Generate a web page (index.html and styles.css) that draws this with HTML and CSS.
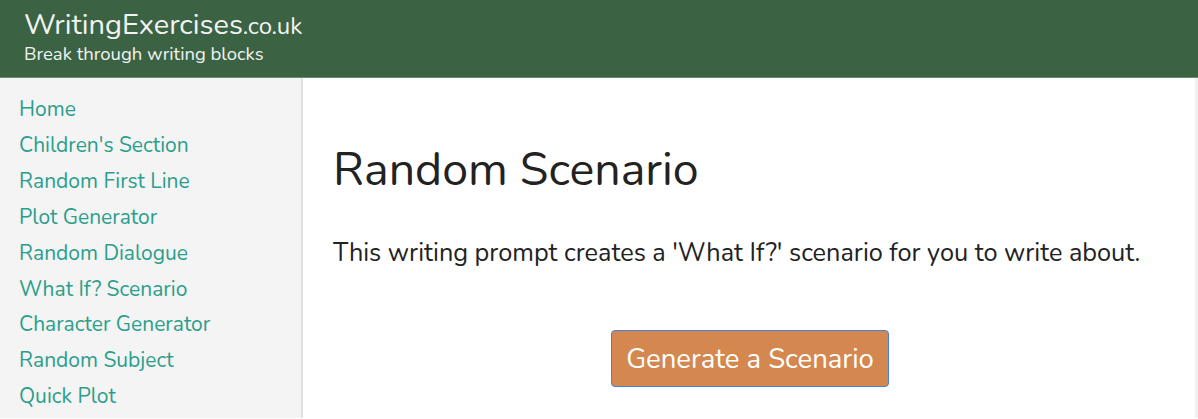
FILE: index.html
```html
<!DOCTYPE html>
<html>
<head>
<meta charset="utf-8">
<link rel="stylesheet" href="styles.css">
</head>
<body>
<header class="site-header">
  <div class="brand"><span class="brand-name">WritingExercises</span><span class="brand-tld">.co.uk</span></div>
  <div class="tagline">Break through writing blocks</div>
</header>
<div class="layout">
  <nav class="sidebar">
    <a href="#">Home</a>
    <a href="#">Children's Section</a>
    <a href="#">Random First Line</a>
    <a href="#">Plot Generator</a>
    <a href="#">Random Dialogue</a>
    <a href="#">What If? Scenario</a>
    <a href="#">Character Generator</a>
    <a href="#">Random Subject</a>
    <a href="#">Quick Plot</a>
  </nav>
  <main class="content">
    <h1 class="title">Random Scenario</h1>
    <p class="intro">This writing prompt creates a 'What If?' scenario for you to write about.</p>
    <div class="actions"><button class="btn">Generate a Scenario</button></div>
  </main>
  <div class="scroll-strip"></div>
</div>
</body>
</html>
```
FILE: styles.css
```css
html, body { margin: 0; padding: 0; }
body {
  font-family: "Nunito", "Lato", "Open Sans", sans-serif;
  background: #fff;
  color: #222;
  height: 419px;
  overflow: hidden;
}
.site-header {
  background: #3b6343;
  height: 78px;
  border-bottom: 1px solid #6c8a71;
  padding: 9px 24px 0;
  box-sizing: border-box;
  color: #f2f2f2;
}
.brand { line-height: 31px; }
.brand-name { font-size: 29px; }
.brand-tld { font-size: 24px; }
.tagline { font-size: 18.5px; line-height: 19px; margin-top: 0; }
.layout { display: flex; height: 340px; }
.sidebar {
  width: 303px;
  background: #f4f4f4;
  border-right: 2px solid #e0e0e0;
  display: flex;
  flex-direction: column;
  padding: 14px 0 0 19px;
  box-sizing: border-box;
  flex-shrink: 0;
}
.sidebar a {
  color: #2b9e8c;
  text-decoration: none;
  font-size: 21px;
  line-height: 35.9px;
}
.content { flex: 1; padding: 0 30px 0 30px; }
.title {
  font-size: 46.5px;
  font-weight: 400;
  margin: 64px 0 0;
  line-height: 56px;
  color: #222;
}
.intro { font-size: 25.3px; margin: 40px 0 0; line-height: 30px; }
.actions { display: flex; justify-content: center; margin-top: 62px; padding-left: 2px; }
.btn {
  font-family: inherit;
  font-size: 27.5px;
  color: #fff;
  background: #d4884f;
  border: 1px solid #4a80d8;
  border-radius: 4px;
  width: 278px;
  height: 57px;
  padding: 0;
}
.scroll-strip { width: 3px; background: #f0f0f0; flex-shrink: 0; }
```
